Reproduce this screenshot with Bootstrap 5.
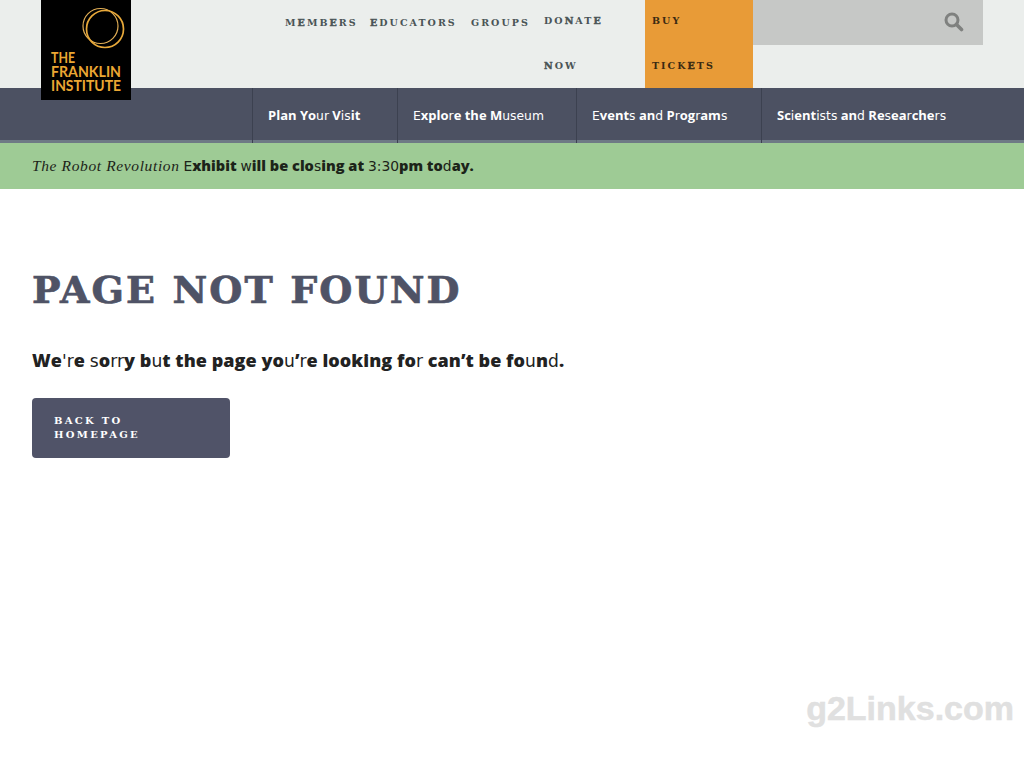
<!DOCTYPE html>
<html lang="en">
<head>
<meta charset="utf-8">
<title>Page Not Found</title>
<link href="https://cdn.jsdelivr.net/npm/bootstrap@5.3.0/dist/css/bootstrap.min.css" rel="stylesheet">
<style>
body{background:#fff;font-family:"Open Sans","Liberation Sans",sans-serif;overflow:hidden;height:768px}
.lt{font-family:"DejaVu Sans",sans-serif;font-weight:400;font-size:.95em}
.hv{-webkit-text-stroke:.45px currentColor}
.topband{height:88px;background:#ebeeec;padding-left:285px}
.logo-box{left:41px;top:0;width:90px;height:100px;background:#000;z-index:5}
.utl{font-family:"DejaVu Serif",serif;font-weight:700;font-size:9.5px;letter-spacing:2.05px;color:#4a5456;text-transform:uppercase;text-decoration:none;line-height:45px;display:block}
.u-m{width:85px}
.u-e{width:101px}
.u-g{width:73px}
.u-d{width:101px;margin-top:-2px}
.u-b{width:108px;background:#e89b37;padding-left:7px}
.u-b .utl{color:#3a2a12;margin-top:-2px}
.searchbox{width:230px;height:45px;background:#c6c8c6;padding-right:19px;padding-bottom:2px}
.mainbar{height:55px;background:#4c5162;border-bottom:3px solid #6e7a85;padding-left:252px}
.mlink{display:block;height:55px;border-left:1px solid #3c4150;padding:0 15px;line-height:55px;color:#fff;font-weight:700;font-size:13px;text-decoration:none;white-space:nowrap;margin-bottom:-3px}
.m1{width:145px}.m2{width:179px}.m3{width:185px}
.noticebar{height:46px;background:#9ecb95;padding-left:32px;line-height:45px;font-size:14.6px;font-weight:800;color:#1c2419;white-space:nowrap}
.noticebar em{font-family:"Liberation Serif",serif;font-weight:400;font-size:15.5px;letter-spacing:.62px}
.pagebody{padding:74px 32px 0}
.pagehead{font-family:"DejaVu Serif",serif;font-weight:700;font-size:38px;line-height:54px;letter-spacing:2.1px;color:#4f5366;margin:0 0 30px;-webkit-text-stroke:.7px #4f5366}
.pagetext{font-size:18px;font-weight:800;line-height:26px;color:#222;margin:0 0 24px;white-space:nowrap;letter-spacing:.05px}
.homebtn{width:198px;height:60px;background:#505368;border:0;border-radius:4px;color:#fff;font-family:"DejaVu Serif",serif;font-weight:700;font-size:10px;letter-spacing:2.3px;line-height:14px;padding:16px 22px;text-align:left;text-transform:uppercase}
.homebtn:hover{background:#505368;color:#fff}
.wmark{right:10px;top:688px;font-family:"Liberation Sans",sans-serif;font-weight:700;font-size:34px;line-height:40px;color:#e0e0e0;-webkit-text-stroke:.5px #e0e0e0}
</style>
</head>
<body>
<header class="position-relative">
  <a href="#" class="logo-box position-absolute d-block" aria-label="The Franklin Institute">
    <svg width="90" height="100" viewBox="0 0 90 100" xmlns="http://www.w3.org/2000/svg">
      <rect width="90" height="100" fill="#000"/>
      <circle cx="59.5" cy="26" r="17.5" fill="none" stroke="#e0ad55" stroke-width="1.2"/>
      <circle cx="64" cy="29" r="18.5" fill="none" stroke="#e8a93a" stroke-width="1.7"/>
      <text x="10" y="63" font-family="Lato,sans-serif" font-weight="700" font-size="15" fill="#eba733" textLength="24" lengthAdjust="spacingAndGlyphs">THE</text>
      <text x="10" y="77" font-family="Lato,sans-serif" font-weight="700" font-size="15" fill="#eba733" textLength="70" lengthAdjust="spacingAndGlyphs">FRANKLIN</text>
      <text x="10" y="91" font-family="Lato,sans-serif" font-weight="700" font-size="15" fill="#eba733" textLength="70" lengthAdjust="spacingAndGlyphs">INSTITUTE</text>
    </svg>
  </a>
  <div class="topband d-flex align-items-start">
    <div class="u-m"><a class="utl" href="#">M<span class="hv">E</span>MB<span class="hv">E</span>RS</a></div>
    <div class="u-e"><a class="utl" href="#"><span class="hv">E</span>ducators</a></div>
    <div class="u-g"><a class="utl" href="#">Groups</a></div>
    <div class="u-d"><a class="utl" href="#">Do<span class="hv">n</span>at<span class="hv">e</span><br><span class="hv">n</span>ow</a></div>
    <div class="u-b align-self-stretch"><a class="utl" href="#">Buy<br>Tick<span class="hv">e</span>ts</a></div>
    <div class="searchbox d-flex align-items-center justify-content-end">
      <svg width="20" height="20" viewBox="0 0 20 20" xmlns="http://www.w3.org/2000/svg"><circle cx="8" cy="8" r="6" fill="none" stroke="#7f817f" stroke-width="3"/><path d="M12.5 12.5 17.5 17.5" stroke="#7f817f" stroke-width="3.6" stroke-linecap="round"/></svg>
    </div>
  </div>
  <nav class="mainbar d-flex">
    <a class="mlink m1" href="#">Plan Yo<span class="lt">ur</span> V<span class="lt">i</span><span class="lt">s</span>it</a>
    <a class="mlink m2" href="#"><span class="lt">E</span>xplo<span class="lt">r</span>e the M<span class="lt">useum</span></a>
    <a class="mlink m3" href="#"><span class="lt">E</span>vent<span class="lt">s</span> an<span class="lt">d</span> P<span class="lt">r</span>og<span class="lt">r</span>am<span class="lt">s</span></a>
    <a class="mlink" href="#">Sc<span class="lt">i</span>ent<span class="lt">ist</span><span class="lt">s</span> an<span class="lt">d</span> Re<span class="lt">s</span>ea<span class="lt">r</span>che<span class="lt">rs</span></a>
  </nav>
</header>
<div class="noticebar"><em>The Robot Revolution</em> <span class="lt">E</span>xhibit <span class="lt">w</span>ill be clo<span class="lt">s</span>ing at <span class="lt">3:30</span>pm to<span class="lt">d</span>ay.</div>
<main class="pagebody">
  <h1 class="pagehead">PAGE NOT FOUND</h1>
  <p class="pagetext">We<span class="lt">'r</span>e <span class="lt">s</span>o<span class="lt">rr</span>y b<span class="lt">u</span>t the page yo<span class="lt">u</span>’<span class="lt">r</span>e looking fo<span class="lt">r</span> can’t be fo<span class="lt">u</span>n<span class="lt">d</span>.</p>
  <a href="#" class="btn homebtn">Back to<br>Homepage</a>
</main>
<div class="wmark position-absolute">g2Links.com</div>
</body>
</html>
